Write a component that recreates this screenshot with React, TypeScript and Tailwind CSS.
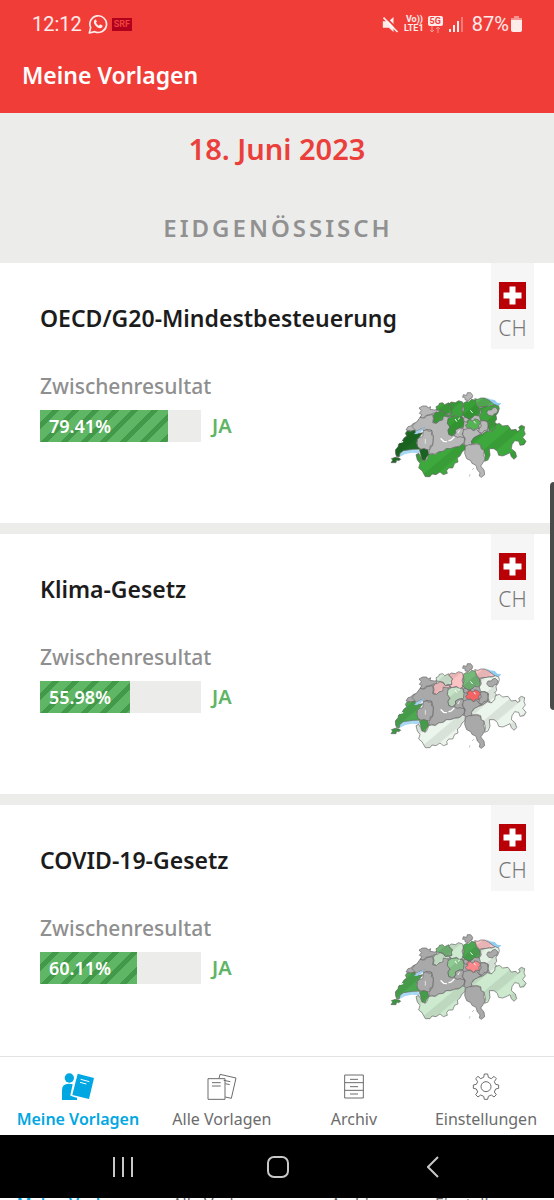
import { useId } from 'react';
import { clsx } from 'clsx';

const GREY = '#b8b8b8';
const MID_GREY = '#a9a9a9';

type CantonColors = Record<string, string>;

interface Proposal {
  title: string;
  yes: number;
  base: string;
  colors: CantonColors;
}

const proposals: Proposal[] = [
  {
    title: 'OECD/G20-Mindestbesteuerung',
    yes: 79.41,
    base: GREY,
    colors: {
      VD: '#1c6a22',
      GE: '#1c6a22',
      VS: '#3da93c',
      GR: '#3da93c',
      SG: '#3da33c',
      ZH: '#36a035',
      AG: '#3da33c',
      BL: '#3da33c',
      SO: '#3da33c',
      LU: '#36a035',
      TG: '#55b354',
      SZ: '#55b354',
    },
  },
  {
    title: 'Klima-Gesetz',
    yes: 55.98,
    base: MID_GREY,
    colors: {
      VD: '#4ca850',
      GE: '#39983f',
      VS: '#ebf5eb',
      GR: '#ebf5eb',
      SG: '#ebf5eb',
      ZH: '#74b978',
      AG: '#fbc3c4',
      BL: '#d3e8d4',
      SO: '#fbc3c4',
      LU: '#c5e3c6',
      TG: '#fbc3c4',
      SZ: '#f46464',
    },
  },
  {
    title: 'COVID-19-Gesetz',
    yes: 60.11,
    base: MID_GREY,
    colors: {
      VD: '#4ca850',
      GE: '#39983f',
      VS: '#cdeacf',
      GR: '#cdeacf',
      SG: '#e3f1e4',
      ZH: '#4ca850',
      AG: '#cdeacf',
      BL: '#74b978',
      SO: '#cdeacf',
      LU: '#90cb93',
      TG: '#fbc3c4',
      SZ: '#f8888a',
    },
  },
];

const cantons: { id: string; d: string }[] = [
  { id: 'NE', d: 'M78 150 L84 140 92 138 100 130 110 128 116 120 130 116 140 126 134 138 120 142 104 152 92 152Z' },
  { id: 'BE', d: 'M96 140 L104 130 112 124 120 112 134 114 142 106 158 104 160 116 158 128 166 130 176 124 186 118 188 108 202 106 206 118 202 130 210 140 204 150 206 164 216 166 224 164 232 170 244 168 254 174 252 188 240 198 222 202 212 206 198 206 188 214 176 216 164 222 154 220 146 224 148 208 158 196 160 168 154 150 140 148 132 152 124 146 110 154Z' },
  { id: 'JU', d: 'M117 84 L128 78 140 78 144 84 152 80 150 88 164 90 172 88 170 98 158 100 150 104 138 106 130 114 120 112 126 104 118 100 124 92Z' },
  { id: 'FR', d: 'M112 178 L118 172 128 170 130 152 140 150 146 154 156 152 154 164 160 170 158 194 150 198 150 208 142 210 134 206 124 208 112 200Z' },
  { id: 'VD', d: 'M47 222 L46 210 54 200 56 192 66 184 72 174 80 168 76 160 82 152 92 154 104 150 108 158 118 160 128 158 118 172 112 178 110 190 114 202 122 208 132 206 144 210 146 224 140 232 136 242 126 240 118 208 100 208 84 210 70 212 60 220 58 230 50 230Z' },
  { id: 'GE', d: 'M33 248 L38 240 34 236 46 232 58 234 62 238 56 242 50 240 48 248Z' },
  { id: 'VS', d: 'M108 224 L116 220 122 230 126 240 136 244 142 236 146 224 156 222 166 224 176 216 190 214 200 206 212 206 224 202 238 200 248 192 256 196 256 208 246 216 240 228 232 234 234 246 224 250 218 264 206 264 200 272 202 280 190 284 180 276 168 284 156 282 150 290 136 290 126 272 116 264 120 250 112 240Z' },
  { id: 'BL', d: 'M168 80 L176 76 178 70 188 68 194 74 206 68 210 76 218 84 214 92 216 100 204 100 196 104 190 94 180 92 170 90Z' },
  { id: 'SO', d: 'M160 106 L166 98 174 96 180 92 190 96 196 104 206 104 212 110 200 110 190 108 188 120 178 122 170 130 160 126 162 116Z' },
  { id: 'AG', d: 'M206 72 L214 66 226 68 236 62 248 66 250 78 246 88 250 100 246 110 238 114 230 106 216 110 208 104 216 100 214 90 218 84Z' },
  { id: 'LU', d: 'M204 116 L214 110 230 108 238 112 248 112 252 128 250 142 238 144 228 150 226 160 216 168 206 162 204 150 210 142 202 130Z' },
  { id: 'OW', d: 'M222 166 L228 158 226 150 238 144 250 146 252 154 246 162 254 174 240 170 232 172Z' },
  { id: 'ZH', d: 'M250 70 L260 64 266 66 274 58 284 60 290 58 288 72 298 84 300 98 296 108 284 106 276 114 264 118 256 112 248 104 252 90Z' },
  { id: 'SH', d: 'M248 52 L250 44 260 46 262 38 272 38 278 46 276 54 270 56 266 62 256 60 254 52Z' },
  { id: 'TG', d: 'M284 56 L294 58 302 54 314 54 326 60 336 68 346 76 336 78 328 76 320 80 306 80 298 82 290 72Z' },
  { id: 'SG', d: 'M300 84 L312 80 328 78 336 78 346 74 356 78 358 86 354 98 348 106 350 118 344 126 352 134 346 144 338 156 328 152 324 140 326 128 316 122 302 122 298 108 304 98Z' },
  { id: 'AR', d: 'M320 98 L324 90 334 90 338 84 346 82 354 90 350 100 342 102 338 108 326 106Z' },
  { id: 'ZG', d: 'M250 114 L258 112 266 118 272 118 270 124 260 128 252 124Z' },
  { id: 'SZ', d: 'M256 136 L264 130 260 124 270 118 280 124 284 116 296 120 302 128 296 136 298 146 288 144 280 152 272 144 262 144Z' },
  { id: 'GL', d: 'M300 124 L312 122 322 126 324 138 322 150 312 152 306 160 296 156 298 146 304 138Z' },
  { id: 'UR', d: 'M250 150 L262 146 272 146 280 152 290 148 298 158 304 160 292 168 280 174 274 186 276 194 262 198 252 192 256 176 248 164Z' },
  { id: 'TI', d: 'M256 200 L266 194 278 194 290 192 302 196 304 206 314 212 310 224 316 236 308 250 302 258 312 270 314 284 304 292 298 288 300 278 292 270 288 256 276 250 272 242 260 236 254 220Z' },
  { id: 'GR', d: 'M276 192 L274 184 284 172 296 166 308 162 322 152 334 156 344 146 346 134 358 130 368 138 384 136 394 150 408 148 412 154 420 150 416 142 424 136 434 140 432 152 436 162 428 172 438 184 432 194 420 196 416 184 404 182 396 194 394 206 406 216 410 230 402 238 394 230 390 218 378 224 368 228 356 226 352 214 342 206 328 206 330 226 324 240 314 244 316 230 312 210 304 206 302 194 290 190Z' },
];

function SwissMap({ base, colors }: { base: string; colors: CantonColors }) {
  const stripes = useId();

  return (
    <svg viewBox="30 30 414 270" className="h-[90px] w-[138px]" role="img" aria-label="Resultate nach Kanton">
      <defs>
        <pattern id={stripes} width="60" height="60" patternUnits="userSpaceOnUse" patternTransform="rotate(50)">
          <rect width="26" height="60" fill="#000" opacity="0.08" />
        </pattern>
      </defs>
      <path d="M52 226 L60 212 78 204 100 206 120 212 118 220 96 218 76 222 60 230Z" fill="#a8d8f4" />
      <path d="M318 52 L330 58 344 60 352 68 364 70 356 78 344 76 332 66Z" fill="#8fcdf3" />
      <path d="M120 108 L200 90 250 76 296 80 336 100 340 145 290 185 200 200 150 205 140 160Z" fill={base} />
      {cantons.map((canton) => (
        <path
          key={canton.id}
          d={canton.d}
          fill={colors[canton.id] ?? base}
          stroke="#666"
          strokeWidth="2"
          strokeLinejoin="round"
        />
      ))}
      {cantons
        .filter((canton) => colors[canton.id])
        .map((canton) => (
          <path key={canton.id} d={canton.d} fill={`url(#${stripes})`} />
        ))}
      <path d="M102 162 L112 152 134 142 128 150 112 162Z" fill="#a5d2f2" stroke="#6c8fae" strokeWidth="1" />
      <g fill="none" stroke="#fff" strokeWidth="4" strokeLinecap="round">
        <path d="M183 176 L191 184 199 185" />
        <path d="M207 182 L214 180 222 172" />
        <path d="M136 178 V190" strokeWidth="2" />
        <path d="M61 187 L68 185" />
        <path d="M226 118 L230 124 M236 118 L238 114 M272 92 L277 98 M282 124 L286 129 M234 158 L238 152" strokeWidth="3" />
      </g>
      <path d="M268 290 L270 282 M276 270 L282 264" stroke="#b9cbd8" strokeWidth="3" fill="none" />
    </svg>
  );
}

function ResultBar({ yes }: { yes: number }) {
  return (
    <div className="mt-2 flex items-center gap-[11px]">
      <div className="relative h-8 w-[161px] bg-[#ececeb]">
        <div
          className="h-full bg-[repeating-linear-gradient(135deg,#5fb665_0px,#5fb665_9px,#42994a_9px,#42994a_14px)]"
          style={{ width: `${yes}%` }}
        />
        <span className="absolute inset-y-0 left-[9px] text-lg leading-8 font-semibold text-white">{yes}%</span>
      </div>
      <span className="text-xl leading-8 font-semibold text-[#5fb565]">JA</span>
    </div>
  );
}

function ProposalCard({ proposal }: { proposal: Proposal }) {
  return (
    <article className="flex h-[260px] shrink-0 bg-white pr-5 pl-10">
      <div className="min-w-0 flex-1 pt-[39px]">
        <h3 className="text-[23px] leading-8 font-semibold whitespace-nowrap text-[#1c1c1c]">{proposal.title}</h3>
        <p className="mt-9 text-[21px] leading-8 font-medium text-[#8f8f8f]">Zwischenresultat</p>
        <ResultBar yes={proposal.yes} />
      </div>
      <div className="flex shrink-0 flex-col items-end">
        <div className="flex h-[86px] w-[43px] flex-col items-center bg-[#f6f6f6] pt-[19px]">
          <svg viewBox="0 0 27 27" className="size-[27px]" aria-hidden="true">
            <path d="M0 0H27V27H0Z" fill="#b90007" />
            <path d="M10.500 4.500H16.500V10.500H22.500V16.500H16.500V22.500H10.500V16.500H4.500V10.500H10.500Z" fill="#fff" />
          </svg>
          <span className="mt-[5px] text-[21px] leading-7 font-light text-[#777]">CH</span>
        </div>
        <div className="mt-[41px] pr-[6px]">
          <SwissMap base={proposal.base} colors={proposal.colors} />
        </div>
      </div>
    </article>
  );
}

function MyProposalsIcon() {
  return (
    <svg viewBox="180 95 102 87" className="h-[29px] w-[34px]" fill="currentColor" aria-hidden="true">
      <circle cx="205" cy="113" r="14" />
      <path d="M183 179 V149 Q183 130 204 130 Q212 130 215 132 L208 165 Q208 168 228 172 V179Z" />
      <path d="M230 100 L279 113 264 176 214 164Z" />
      <path d="M239 117 L265 124 M237 126 L256 131" stroke="#fff" strokeWidth="3" />
    </svg>
  );
}

function AllProposalsIcon() {
  return (
    <svg viewBox="617 95 102 87" className="h-[29px] w-[34px]" fill="none" stroke="currentColor" strokeWidth="3" aria-hidden="true">
      <path d="M626 115 H677 V177 H626Z" />
      <path d="M659 114 L662 102 710 113 696 174 678 170" />
      <path d="M638 127 H664 M638 137 H664 M673 120 L693 124 M678 130 L691 133" />
    </svg>
  );
}

function ArchiveIcon() {
  return (
    <svg viewBox="181 95 102 87" className="h-[29px] w-[34px]" fill="none" stroke="currentColor" strokeWidth="3" aria-hidden="true">
      <path d="M204 104 H260 V173 H204Z M204 127 H260 M204 150 H260" />
      <path d="M220 117 H244 M220 139 H244 M220 161 H244" />
    </svg>
  );
}

function SettingsIcon() {
  return (
    <svg viewBox="576 95 102 87" className="h-[29px] w-[34px]" fill="none" stroke="currentColor" strokeWidth="3" strokeLinejoin="round" aria-hidden="true">
      <circle cx="627" cy="139" r="15" />
      <path d="M622 101 H632 L634 111 643 115 651 108 658 115 652 124 656 132 665 134 V144 L656 146 652 155 658 163 651 170 643 164 634 168 632 177 H622 L620 168 611 164 603 170 596 163 602 155 598 146 589 144 V134 L598 132 602 124 596 115 603 108 611 115 620 111Z" />
    </svg>
  );
}

const tabs = [
  { label: 'Meine Vorlagen', icon: MyProposalsIcon, active: true },
  { label: 'Alle Vorlagen', icon: AllProposalsIcon, active: false },
  { label: 'Archiv', icon: ArchiveIcon, active: false },
  { label: 'Einstellungen', icon: SettingsIcon, active: false },
];

function StatusBar() {
  return (
    <div className="flex h-12 items-center justify-between pr-8 pl-8 font-[Roboto,sans-serif] text-white/90">
      <div className="flex items-center">
        <span className="text-xl leading-6">12:12</span>
        <svg viewBox="262 45 60 60" className="ml-[6px] size-5" aria-hidden="true">
          <path d="M266 102 L270 86 A25 25 0 1 1 282 98Z" fill="none" stroke="currentColor" strokeWidth="5" strokeLinejoin="round" />
          <path d="M284 61 Q277 66 281 75 Q288 87 299 88 Q306 87 306 80 L299 76 294 80 Q288 76 286 71 L289 67Z" fill="currentColor" />
        </svg>
        <span className="ml-1 bg-[#b0001e] px-[2px] text-[9px] leading-[13px] font-bold text-[#f0403c]">SRF</span>
      </div>
      <div className="flex items-center">
        <svg viewBox="310 48 50 51" className="size-[17px]" fill="currentColor" aria-hidden="true">
          <path d="M312 64 H330 L344 51 V96 L330 83 H312Z" />
          <path d="M314 46 L360 92" stroke="#f13d38" strokeWidth="6" />
          <path d="M314 53 L356 96" stroke="currentColor" strokeWidth="5" />
        </svg>
        <div className="ml-[5px] flex flex-col text-[9px] leading-[9px] font-bold">
          <span className="pl-[2px]">Vo))</span>
          <span>LTE1</span>
        </div>
        <div className="ml-1 flex flex-col items-center">
          <span className="rounded-[2px] bg-white/90 px-[2px] text-[9px] leading-[10px] font-bold text-[#f13d38]">5G</span>
          <svg viewBox="0 0 12 7" className="h-[7px] w-3" fill="none" stroke="#f99a96" aria-hidden="true">
            <path d="M3 0V6M1 4L3 6L5 4M9 7V1M7 3L9 1L11 3" />
          </svg>
        </div>
        <svg viewBox="0 0 15 15" className="ml-[6px] size-[15px]" fill="currentColor" aria-hidden="true">
          <path d="M0 12H2V15H0Z M4 8H6V15H4Z M8 4H10V15H8Z" />
          <path d="M12 0H14V15H12Z" opacity="0.35" />
        </svg>
        <span className="ml-2 text-xl leading-6">87%</span>
        <svg viewBox="0 0 11 16" className="ml-[2px] h-4 w-[11px]" fill="currentColor" aria-hidden="true">
          <path d="M3 0H8V2H11V4H0V2H3Z" opacity="0.5" />
          <path d="M0 4H11V14Q11 16 9 16H2Q0 16 0 14Z" />
        </svg>
      </div>
    </div>
  );
}

function SystemNavigation() {
  return (
    <div className="grid h-[63px] shrink-0 grid-cols-3 items-center bg-black pr-[43px] pl-[45px] text-[#c8c8c8]">
      <button type="button" aria-label="Letzte Apps" className="flex justify-center">
        <svg viewBox="0 0 20 22" className="h-[22px] w-5" stroke="currentColor" strokeWidth="2" aria-hidden="true">
          <path d="M1 1V21M10 1V21M19 1V21" />
        </svg>
      </button>
      <button type="button" aria-label="Startseite" className="flex justify-center">
        <svg viewBox="0 0 22 22" className="size-[22px]" fill="none" stroke="currentColor" strokeWidth="2" aria-hidden="true">
          <rect x="1" y="1" width="20" height="20" rx="6" />
        </svg>
      </button>
      <button type="button" aria-label="Zurück" className="flex justify-center">
        <svg viewBox="0 0 12 22" className="h-[22px] w-3" fill="none" stroke="currentColor" strokeWidth="2" aria-hidden="true">
          <path d="M11 1L1 11L11 21" />
        </svg>
      </button>
    </div>
  );
}

export default function App() {
  return (
    <div className="relative flex h-screen flex-col overflow-hidden bg-white font-['Noto_Sans','Open_Sans',sans-serif]">
      <header className="h-[113px] shrink-0 bg-[#f13d38]">
        <StatusBar />
        <h1 className="mt-[11px] pl-[22px] text-[23px] leading-8 font-semibold text-white">Meine Vorlagen</h1>
      </header>

      <main className="flex min-h-0 flex-1 flex-col gap-[11px] overflow-y-auto bg-[#ececeb] [scrollbar-width:none]">
        <div className="-mb-[11px] h-[150px] shrink-0 pt-4 text-center">
          <h2 className="text-[29px] leading-10 font-semibold text-[#ea3f3b]">18. Juni 2023</h2>
          <p className="mt-[39px] pl-[2px] text-2xl leading-10 font-semibold tracking-[3px] text-[#919191]">EIDGENÖSSISCH</p>
        </div>
        {proposals.map((proposal) => (
          <ProposalCard key={proposal.title} proposal={proposal} />
        ))}
      </main>

      <nav className="grid h-[79px] shrink-0 grid-cols-[1.18fr_1fr_1fr_1fr] border-t border-[#e4e4e4] bg-white pr-[2px]">
        {tabs.map((tab) => (
          <a
            key={tab.label}
            href="#"
            aria-current={tab.active ? 'page' : undefined}
            className={clsx(
              'flex flex-col items-center pt-[15px] text-base leading-6 whitespace-nowrap',
              tab.active ? 'font-semibold text-[#00a7e2]' : 'text-[#6c6c6c]',
            )}
          >
            <tab.icon />
            <span className="mt-[6px]">{tab.label}</span>
          </a>
        ))}
      </nav>

      <SystemNavigation />

      <div aria-hidden="true" className="grid h-[2px] shrink-0 grid-cols-[1.18fr_1fr_1fr_1fr] overflow-hidden bg-white pr-[2px] text-center text-base leading-3 whitespace-nowrap">
        {tabs.map((tab) => (
          <span key={tab.label} className={tab.active ? 'font-semibold text-[#00a7e2]' : 'text-[#6c6c6c]'}>
            {tab.label}
          </span>
        ))}
      </div>

      <div className="absolute top-[482px] right-0 h-[228px] w-1 rounded-l bg-[#4a4a4a]" />
    </div>
  );
}
